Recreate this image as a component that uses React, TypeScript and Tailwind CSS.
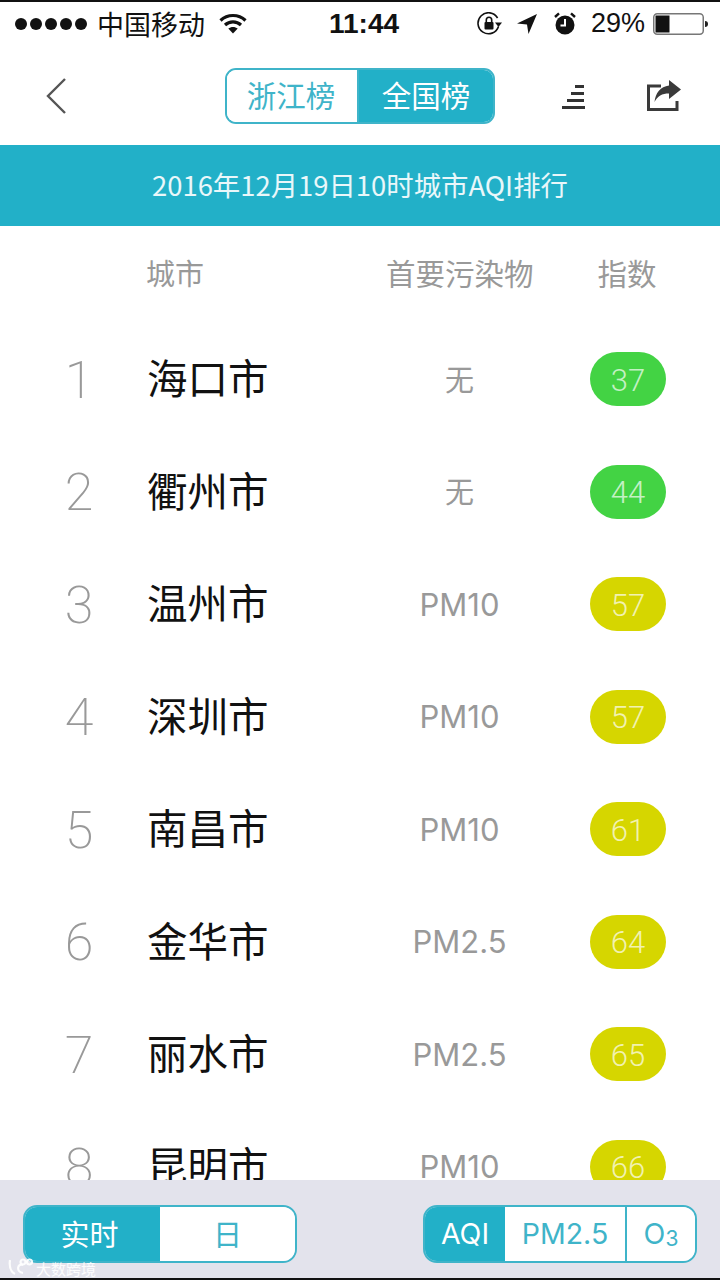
const rows = [
  { n: '1', city: '海口市', p: '无', v: '37', c: 'bg-[#43d344]' },
  { n: '2', city: '衢州市', p: '无', v: '44', c: 'bg-[#43d344]' },
  { n: '3', city: '温州市', p: 'PM10', v: '57', c: 'bg-[#d6d600]' },
  { n: '4', city: '深圳市', p: 'PM10', v: '57', c: 'bg-[#d6d600]' },
  { n: '5', city: '南昌市', p: 'PM10', v: '61', c: 'bg-[#d6d600]' },
  { n: '6', city: '金华市', p: 'PM2.5', v: '64', c: 'bg-[#d6d600]' },
  { n: '7', city: '丽水市', p: 'PM2.5', v: '65', c: 'bg-[#d6d600]' },
  { n: '8', city: '昆明市', p: 'PM10', v: '66', c: 'bg-[#d6d600]' },
];

const cjk = "font-['Noto_Sans_CJK_SC','Noto_Sans',sans-serif]";

function Wifi() {
  return (
    <svg width="28" height="21" viewBox="0 0 28 21" fill="none" stroke="#111" strokeWidth="3.2">
      <path d="M1.5 7.5C8.5 .8 19.5 .8 26.5 7.5" />
      <path d="M6 12C10.5 7.8 17.5 7.8 22 12" />
      <path d="M14 20.5L9.3 15.6C12 13.4 16 13.4 18.7 15.6Z" fill="#111" stroke="none" />
    </svg>
  );
}

function RotationLock() {
  return (
    <svg width="27" height="24" viewBox="0 0 27 24" fill="none" stroke="#111" strokeWidth="1.6">
      <path d="M21.5 14.5A10.5 10.5 0 1 1 20.6 6" />
      <path d="M18 10.5h7l-3.5 4.5z" fill="#111" stroke="none" />
      <rect x="7.5" y="10" width="9" height="7.5" rx="1" fill="#111" stroke="none" />
      <path d="M9.3 10V8a2.7 2.7 0 0 1 5.4 0v2" />
    </svg>
  );
}

function Arrow() {
  return (
    <svg width="20" height="20" viewBox="0 0 20 20">
      <path d="M0 9.5L20 0L11.5 20L10 10.5Z" fill="#111" />
    </svg>
  );
}

function Alarm() {
  return (
    <svg width="22" height="23" viewBox="0 0 22 23">
      <circle cx="11" cy="13" r="9.5" fill="#111" />
      <path d="M1 5L5 1.3M21 5L17 1.3" stroke="#111" strokeWidth="2.4" />
      <path d="M11 7v6.5H6.5" stroke="#fff" strokeWidth="2" fill="none" />
    </svg>
  );
}

function Battery() {
  return (
    <svg width="55" height="22" viewBox="0 0 55 22">
      <rect x=".75" y=".75" width="49.5" height="20.5" rx="3.5" fill="#fff" stroke="#777" strokeWidth="1.5" />
      <rect x="2.5" y="2.5" width="14" height="17" fill="#111" />
      <path d="M52 8c2 0 3 1.300 3 3s-1 3-3 3z" fill="#222" />
    </svg>
  );
}

function Back() {
  return (
    <svg width="20" height="36" viewBox="0 0 20 36" fill="none" stroke="#555" strokeWidth="2.4">
      <path d="M19 1L2 18L19 35" />
    </svg>
  );
}

function Rank() {
  return (
    <svg width="24" height="24" viewBox="0 0 24 24" fill="#333">
      <rect x="13" y="0" width="9" height="3" />
      <rect x="9" y="7" width="13" height="3" />
      <rect x="5" y="14" width="17" height="3" />
      <rect x="0" y="21" width="23" height="3" />
    </svg>
  );
}

function Share() {
  return (
    <svg width="34" height="31" viewBox="0 0 34 31" fill="none">
      <path d="M14 6H1.500V29.500H30V21" stroke="#3a3a3a" strokeWidth="3" />
      <path d="M22 0L34 9.500L22 19V13.500C15 13.500 10.500 16 7.500 22C8.500 13 13.500 6.500 22 5.500Z" fill="#3a3a3a" />
    </svg>
  );
}

export default function App() {
  return (
    <div className={`relative flex h-[1280px] w-[720px] flex-col overflow-hidden bg-white ${cjk}`}>
      <div className="h-[2px] shrink-0 bg-[#111]" />

      {/* status bar */}
      <div className="flex h-[48px] shrink-0 items-center pb-[5px] pl-[15px] text-[#111]">
        <div className="flex gap-[3px]">
          {[0, 1, 2, 3, 4].map((i) => (
            <span key={i} className="h-[12px] w-[12px] rounded-full bg-[#111]" />
          ))}
        </div>
        <span className="ml-[10px] text-[27px] leading-none">中国移动</span>
        <span className="ml-[14px] flex"><Wifi /></span>
        <span className="ml-[82px] font-['Liberation_Sans'] text-[28px] leading-none font-bold">11:44</span>
        <span className="ml-[78px] flex"><RotationLock /></span>
        <span className="ml-[13px] flex"><Arrow /></span>
        <span className="ml-[17px] flex"><Alarm /></span>
        <span className="ml-[15px] font-['Liberation_Sans'] text-[27px] leading-none">29%</span>
        <span className="ml-[8px] flex"><Battery /></span>
      </div>

      {/* nav */}
      <div className="flex h-[95px] shrink-0 items-start pl-[46px]">
        <span className="mt-[28px] flex"><Back /></span>
        <div className="mt-[18px] ml-[159px] flex h-[56px] w-[270px] overflow-hidden rounded-[11px] border-2 border-[#3fb4c9] text-[29.5px]">
          <span className="flex w-[132px] items-center justify-center border-r-2 border-[#3fb4c9] bg-white pr-[2px] pb-[3px] text-[#3fb4c9]">浙江榜</span>
          <span className="flex flex-1 items-center justify-center bg-[#22b0c8] pb-[3px] text-white">全国榜</span>
        </div>
        <span className="mt-[35px] ml-[67px] flex"><Rank /></span>
        <span className="mt-[30px] ml-[61px] flex"><Share /></span>
      </div>

      {/* banner */}
      <div className="flex h-[81px] shrink-0 items-center justify-center bg-[#22b0c8] pb-[2px] text-[27.4px] leading-none text-white/90">
        2016年12月19日10时城市AQI排行
      </div>

      {/* list */}
      <div className="min-h-0 flex-1 overflow-hidden">
        <div className="flex h-[98px] items-center pb-[4px] text-[#999]">
          <span className="ml-[146px] text-[29px]">城市</span>
          <span className="mb-[2px] ml-[182px] text-[29.5px]">首要污染物</span>
          <span className="mb-[2px] ml-[64px] text-[29.5px]">指数</span>
        </div>
        {rows.map((r) => (
          <div key={r.n} className="flex h-[112.5px] items-center">
            <span className="mt-[1px] w-[147px] pr-[38px] pl-[49px] text-center font-['Roboto'] text-[52px] leading-none font-extralight text-[#999]">{r.n}</span>
            <span className="w-[240px] pb-[6px] text-[40.5px] leading-none text-[#111]">{r.city}</span>
            <span className="w-[145px] pb-[2px] text-center font-['Inter'] text-[31px] leading-none text-[#999]">
              {r.p === '无' ? <span className={`${cjk} text-[29px]`}>无</span> : r.p}
            </span>
            <span className={`mb-[2px] ml-[58px] flex h-[54px] w-[76px] items-center justify-center rounded-[27px] pt-[2px] font-['Roboto'] text-[31px] leading-none font-light text-white/70 ${r.c}`}>
              {r.v}
            </span>
          </div>
        ))}
      </div>

      {/* footer */}
      <div className="flex h-[98px] shrink-0 items-start justify-between bg-[#e3e3ec] px-[23px] pt-[25px]">
        <div className="flex h-[58px] w-[274px] overflow-hidden rounded-[14px] border-2 border-[#3fb4c9] text-[29px]">
          <span className="flex w-[135px] items-center justify-center bg-[#22b0c8] pr-[6px] text-white">实时</span>
          <span className="flex flex-1 items-center justify-center bg-white text-[#3fb4c9]">日</span>
        </div>
        <div className="flex h-[58px] w-[274px] overflow-hidden rounded-[14px] border-2 border-[#3fb4c9] font-['Inter'] text-[28.5px]">
          <span className="flex w-[80px] items-center justify-center bg-[#22b0c8] text-white">AQI</span>
          <span className="flex w-[122px] items-center justify-center border-r-2 border-[#3fb4c9] bg-white text-[#3fb4c9]">PM2.5</span>
          <span className="flex flex-1 items-center justify-center bg-white text-[#3fb4c9]">
            O<sub className="text-[21px]">3</sub>
          </span>
        </div>
      </div>
      <div className="h-[2px] shrink-0 bg-[#111]" />

      {/* watermark */}
      <div className="absolute top-[1257px] left-[8px] flex items-center gap-[3px] text-[15px] leading-none text-white/90">
        <svg width="25" height="18" viewBox="0 0 25 18" fill="none" stroke="#fff" strokeOpacity=".9" strokeWidth="2.2">
          <path d="M2 2C1 9 3 14 7 16" />
          <path d="M15 7C9 5 8 14 15 15" />
          <circle cx="15" cy="4" r="2.500" />
          <circle cx="21.500" cy="4" r="2.500" />
        </svg>
        <span className="mt-[4px]">大数跨境</span>
      </div>
    </div>
  );
}
